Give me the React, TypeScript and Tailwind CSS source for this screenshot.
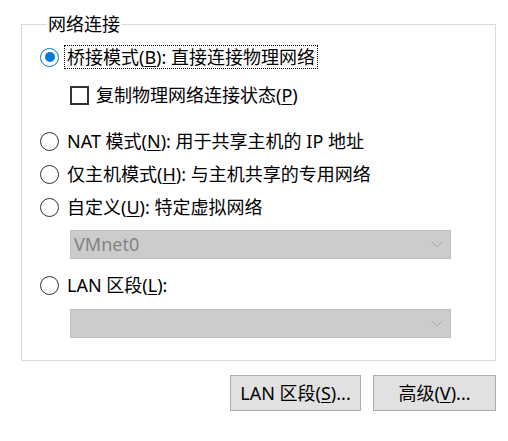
import React from "react";

const font = { fontFamily: '"Noto Sans", "Noto Sans CJK SC", sans-serif' };

function Radio({ checked }: { checked?: boolean }) {
  return (
    <span
      className={
        "flex w-[19px] h-[19px] shrink-0 items-center justify-center rounded-full border " +
        (checked ? "border-[#0078d7]" : "border-[#333333]")
      }
    >
      {checked && <span className="block w-[10px] h-[10px] rounded-full bg-[#0078d7]" />}
    </span>
  );
}

function RadioRow({
  checked,
  focused,
  children,
  className,
}: {
  checked?: boolean;
  focused?: boolean;
  children: React.ReactNode;
  className?: string;
}) {
  return (
    <div className={"flex h-[24px] items-center " + (className ?? "")}>
      <Radio checked={checked} />
      <span
        className={
          "ml-[5px] px-[2px] leading-[22px] whitespace-nowrap border border-dotted " +
          (focused ? "border-black" : "border-transparent")
        }
      >
        {children}
      </span>
    </div>
  );
}

function Chevron() {
  return (
    <svg width="12" height="7" viewBox="0 0 12 7" className="shrink-0">
      <path d="M0.5 0.5 L6 6 L11.5 0.5" fill="none" stroke="#a6a6a6" strokeWidth="1" />
    </svg>
  );
}

function Select({ value, className }: { value?: string; className?: string }) {
  return (
    <div
      className={
        "ml-[30px] flex h-[29px] w-[381px] items-center justify-between border border-[#bfbfbf] bg-[#cccccc] pl-[3px] pr-[7px] text-[#838383] " +
        (className ?? "")
      }
    >
      <span>{value}</span>
      <Chevron />
    </div>
  );
}

export default function App() {
  return (
    <div className="w-[508px] h-[441px] bg-white text-[18px] text-black" style={font}>
      <fieldset className="ml-[21px] mt-[12px] w-[475px] border border-[#dcdcdc] pl-[18px] pb-[22px]">
        <legend className="ml-[7px] px-[1px] leading-[24px]">网络连接</legend>
        <RadioRow checked focused className="mt-[9px]">
          桥接模式(<u className="underline-offset-2">B</u>): 直接连接物理网络
        </RadioRow>
        <div className="mt-[14px] ml-[30px] flex h-[24px] items-center">
          <span className="block w-[19px] h-[19px] border-2 border-[#333333]" />
          <span className="ml-[7px] whitespace-nowrap">
            复制物理网络连接状态(<u className="underline-offset-2">P</u>)
          </span>
        </div>
        <RadioRow className="mt-[22px]">
          NAT 模式(<u className="underline-offset-2">N</u>): 用于共享主机的 IP 地址
        </RadioRow>
        <RadioRow className="mt-[9px]">
          仅主机模式(<u className="underline-offset-2">H</u>): 与主机共享的专用网络
        </RadioRow>
        <RadioRow className="mt-[9px]">
          自定义(<u className="underline-offset-2">U</u>): 特定虚拟网络
        </RadioRow>
        <Select value="VMnet0" className="mt-[11px]" />
        <RadioRow className="mt-[14px]">
          LAN 区段(<u className="underline-offset-2">L</u>):
        </RadioRow>
        <Select className="mt-[12px]" />
      </fieldset>
      <div className="mt-[14px] flex w-[496px] justify-end gap-[12px]">
        <button className="h-[36px] w-[131px] border border-[#adadad] bg-[#e1e1e1]">
          LAN 区段(<u className="underline-offset-2">S</u>)...
        </button>
        <button className="h-[36px] w-[123px] border border-[#adadad] bg-[#e1e1e1]">
          高级(<u className="underline-offset-2">V</u>)...
        </button>
      </div>
    </div>
  );
}
